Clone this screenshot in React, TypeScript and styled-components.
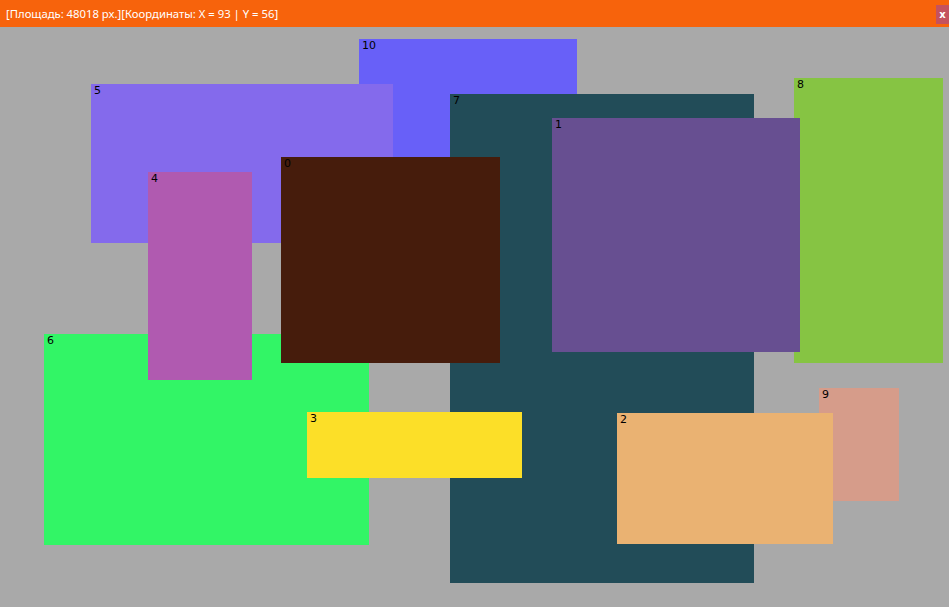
import React from "react";
import styled, { createGlobalStyle } from "styled-components";

const Global = createGlobalStyle`
  html, body { margin: 0; padding: 0; width: 949px; height: 607px; overflow: hidden; }
  #root { width: 949px; height: 607px; }
`;

const Window = styled.div`
  display: flex;
  flex-direction: column;
  width: 949px;
  height: 607px;
  background: #a9a9a9;
  font-family: "Noto Sans", "Open Sans", sans-serif;
`;

const TitleBar = styled.div`
  display: flex;
  align-items: center;
  justify-content: space-between;
  height: 27px;
  flex: 0 0 27px;
  background: #f7630c;
  padding-left: 6px;
`;

const Title = styled.span`
  color: #ffffff;
  font-size: 11.3px;
  white-space: nowrap;
`;

const CloseButton = styled.button`
  display: flex;
  align-items: center;
  justify-content: center;
  width: 13px;
  height: 19px;
  margin-top: 2px;
  padding: 0;
  border: none;
  background: #c4525e;
  color: #ffffff;
  font-family: "DejaVu Sans", sans-serif;
  font-weight: bold;
  font-size: 10px;
  line-height: 1;
`;

const Canvas = styled.div`
  position: relative;
  flex: 1;
  overflow: hidden;
`;

const Rect = styled.div<{ $bg: string }>`
  position: absolute;
  background: ${(p) => p.$bg};
`;

const Label = styled.span`
  position: absolute;
  left: 3px;
  top: 0px;
  font-family: "DejaVu Sans", sans-serif;
  font-size: 11px;
  line-height: 14px;
  color: #000000;
`;

type Item = { id: number; x: number; y: number; w: number; h: number; color: string };

const items: Item[] = [
  { id: 10, x: 359, y: 39, w: 218, h: 140, color: "#6860f8" },
  { id: 9, x: 819, y: 388, w: 80, h: 113, color: "#d69c8a" },
  { id: 8, x: 794, y: 78, w: 149, h: 285, color: "#86c443" },
  { id: 7, x: 450, y: 94, w: 304, h: 489, color: "#224c58" },
  { id: 6, x: 44, y: 334, w: 325, h: 211, color: "#32f566" },
  { id: 5, x: 91, y: 84, w: 302, h: 159, color: "#846aec" },
  { id: 4, x: 148, y: 172, w: 104, h: 208, color: "#b05ab0" },
  { id: 3, x: 307, y: 412, w: 215, h: 66, color: "#fcdf28" },
  { id: 2, x: 617, y: 413, w: 216, h: 131, color: "#eab272" },
  { id: 1, x: 552, y: 118, w: 248, h: 234, color: "#674f91" },
  { id: 0, x: 281, y: 157, w: 219, h: 206, color: "#461c0c" },
];

const TOP = 27;

export default function App() {
  return (
    <>
      <Global />
      <Window>
        <TitleBar>
          <Title>[Площадь: 48018 px.][Координаты: X = 93 | Y = 56]</Title>
          <CloseButton>x</CloseButton>
        </TitleBar>
        <Canvas>
          {items.map((r) => (
            <Rect
              key={r.id}
              $bg={r.color}
              style={{ left: r.x, top: r.y - TOP, width: r.w, height: r.h }}
            >
              <Label>{r.id}</Label>
            </Rect>
          ))}
        </Canvas>
      </Window>
    </>
  );
}
